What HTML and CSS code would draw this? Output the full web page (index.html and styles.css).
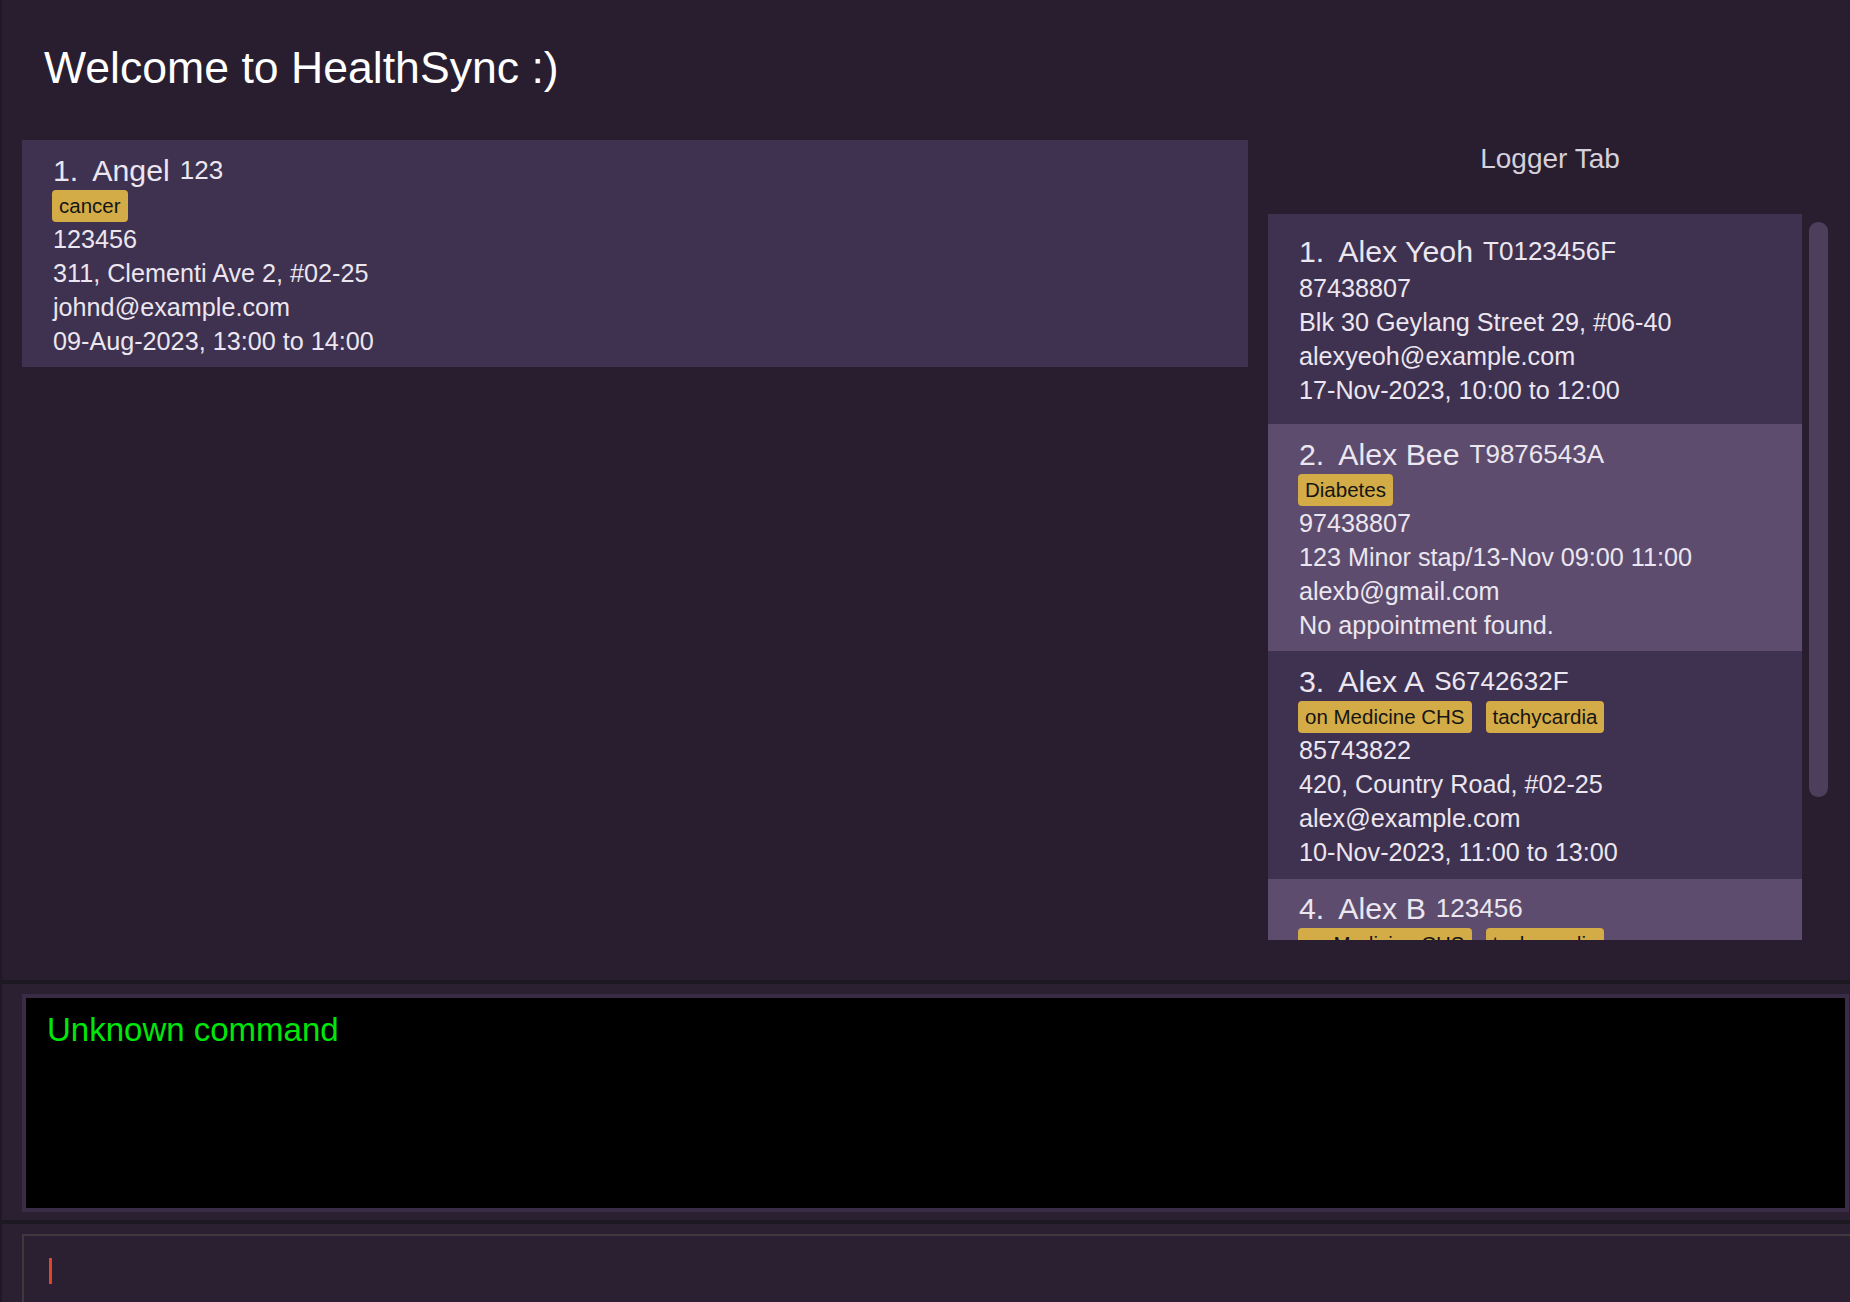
FILE: index.html
```html
<!DOCTYPE html>
<html lang="en">
<head>
<meta charset="utf-8">
<title>HealthSync</title>
<link rel="stylesheet" href="styles.css">
</head>
<body>
<div class="app">
  <div class="top">
    <section class="main-col">
      <h1 class="welcome">Welcome to HealthSync :)</h1>
      <div class="patient-list">
        <article class="card">
          <div class="card-head"><span class="idx">1.</span><span class="name">Angel</span><span class="pid">123</span></div>
          <div class="tags"><span class="tag">cancer</span></div>
          <div class="line">123456</div>
          <div class="line">311, Clementi Ave 2, #02-25</div>
          <div class="line">johnd@example.com</div>
          <div class="line">09-Aug-2023, 13:00 to 14:00</div>
        </article>
      </div>
    </section>
    <aside class="logger-col">
      <h2 class="logger-title">Logger Tab</h2>
      <div class="logger-body">
        <div class="logger-list">
          <article class="card">
            <div class="card-head"><span class="idx">1.</span><span class="name">Alex Yeoh</span><span class="pid">T0123456F</span></div>
            <div class="line">87438807</div>
            <div class="line">Blk 30 Geylang Street 29, #06-40</div>
            <div class="line">alexyeoh@example.com</div>
            <div class="line">17-Nov-2023, 10:00 to 12:00</div>
          </article>
          <article class="card card-alt">
            <div class="card-head"><span class="idx">2.</span><span class="name">Alex Bee</span><span class="pid">T9876543A</span></div>
            <div class="tags"><span class="tag">Diabetes</span></div>
            <div class="line">97438807</div>
            <div class="line">123 Minor stap/13-Nov 09:00 11:00</div>
            <div class="line">alexb@gmail.com</div>
            <div class="line">No appointment found.</div>
          </article>
          <article class="card">
            <div class="card-head"><span class="idx">3.</span><span class="name">Alex A</span><span class="pid">S6742632F</span></div>
            <div class="tags"><span class="tag">on Medicine CHS</span><span class="tag">tachycardia</span></div>
            <div class="line">85743822</div>
            <div class="line">420, Country Road, #02-25</div>
            <div class="line">alex@example.com</div>
            <div class="line">10-Nov-2023, 11:00 to 13:00</div>
          </article>
          <article class="card card-alt">
            <div class="card-head"><span class="idx">4.</span><span class="name">Alex B</span><span class="pid">123456</span></div>
            <div class="tags"><span class="tag">on Medicine CHS</span><span class="tag">tachycardia</span></div>
            <div class="line">85743822</div>
            <div class="line">420, Country Road, #02-25</div>
            <div class="line">alex@example.com</div>
            <div class="line">10-Nov-2023, 11:00 to 13:00</div>
          </article>
        </div>
        <div class="scrollbar"><div class="thumb"></div></div>
      </div>
    </aside>
  </div>
  <div class="result-section">
    <div class="result-box">
      <p class="result-text">Unknown command</p>
    </div>
  </div>
  <div class="command-section">
    <div class="command-box"><span class="caret"></span></div>
  </div>
</div>
</body>
</html>
```
FILE: styles.css
```css
* { box-sizing: border-box; }
html, body { margin: 0; padding: 0; height: 100%; }
body {
  background: #281e30;
  font-family: "Liberation Sans", Arial, sans-serif;
  color: #ebe6ef;
  overflow: hidden;
}
.app {
  height: 1302px;
  display: flex;
  flex-direction: column;
  border-left: 2px solid #1f1827;
}
.top {
  height: 980px;
  flex-shrink: 0;
  display: flex;
}
.main-col {
  width: 1256px;
  padding: 0 10px 0 20px;
}
.welcome {
  margin: 0;
  height: 140px;
  padding: 42px 0 0 22px;
  font-size: 44.6px;
  line-height: 52px;
  font-weight: normal;
  color: #ffffff;
}
.card {
  background: #3f3150;
  min-height: 210px;
  padding: 11.6px 0 9.7px 31px;
  display: flex;
  flex-direction: column;
  justify-content: center;
}
.card-alt { background: #5d4c6e; }
.card-head {
  height: 38px;
  line-height: 36px;
  font-size: 30.3px;
  white-space: nowrap;
  flex-shrink: 0;
}
.idx { margin-right: 14px; }
.pid {
  font-size: 26px;
  margin-left: 10px;
  vertical-align: 2px;
}
.tags {
  display: flex;
  gap: 14px;
  height: 32px;
  margin-left: -1px;
  flex-shrink: 0;
}
.tag {
  background: #d3ab47;
  color: #151515;
  font-size: 20.5px;
  line-height: 32px;
  padding: 0 7px;
  border-radius: 4px;
}
.line {
  font-size: 25.2px;
  line-height: 34px;
  height: 34px;
  white-space: nowrap;
  flex-shrink: 0;
}
.logger-col {
  width: 592px;
  padding: 0 22px 0 10px;
  display: flex;
  flex-direction: column;
}
.logger-title {
  margin: 0;
  height: 214px;
  padding: 143px 0 0 4px;
  font-size: 28px;
  line-height: 32px;
  font-weight: normal;
  text-align: center;
  color: #d5d0db;
}
.logger-body {
  display: flex;
  gap: 7px;
  height: 726px;
}
.logger-list {
  width: 534px;
  overflow: hidden;
}
.logger-list .card { flex-shrink: 0; }
.scrollbar {
  width: 19px;
  padding-top: 8px;
}
.thumb {
  height: 575px;
  border-radius: 9px;
  background: #4d3e5c;
}
.result-section {
  height: 240px;
  flex-shrink: 0;
  border-top: 4px solid #1e1823;
  background: #2a2032;
  padding: 10px 1px 8px 20px;
}
.result-box {
  height: 218px;
  border: 4px solid #3a2c46;
  background: #000000;
}
.result-text {
  margin: 0;
  padding: 13px 0 0 21px;
  font-size: 33px;
  line-height: 38px;
  color: #00e70b;
}
.command-section {
  flex: 1;
  border-top: 4px solid #1e1823;
  background: #2a2032;
  padding: 10px 0 0 20px;
}
.command-box {
  height: 100%;
  border-top: 2px solid #3e393e;
  border-left: 2px solid #3e393e;
  padding: 22px 0 0 25px;
}
.caret {
  display: block;
  width: 3px;
  height: 26px;
  background: #e0452c;
}
```
